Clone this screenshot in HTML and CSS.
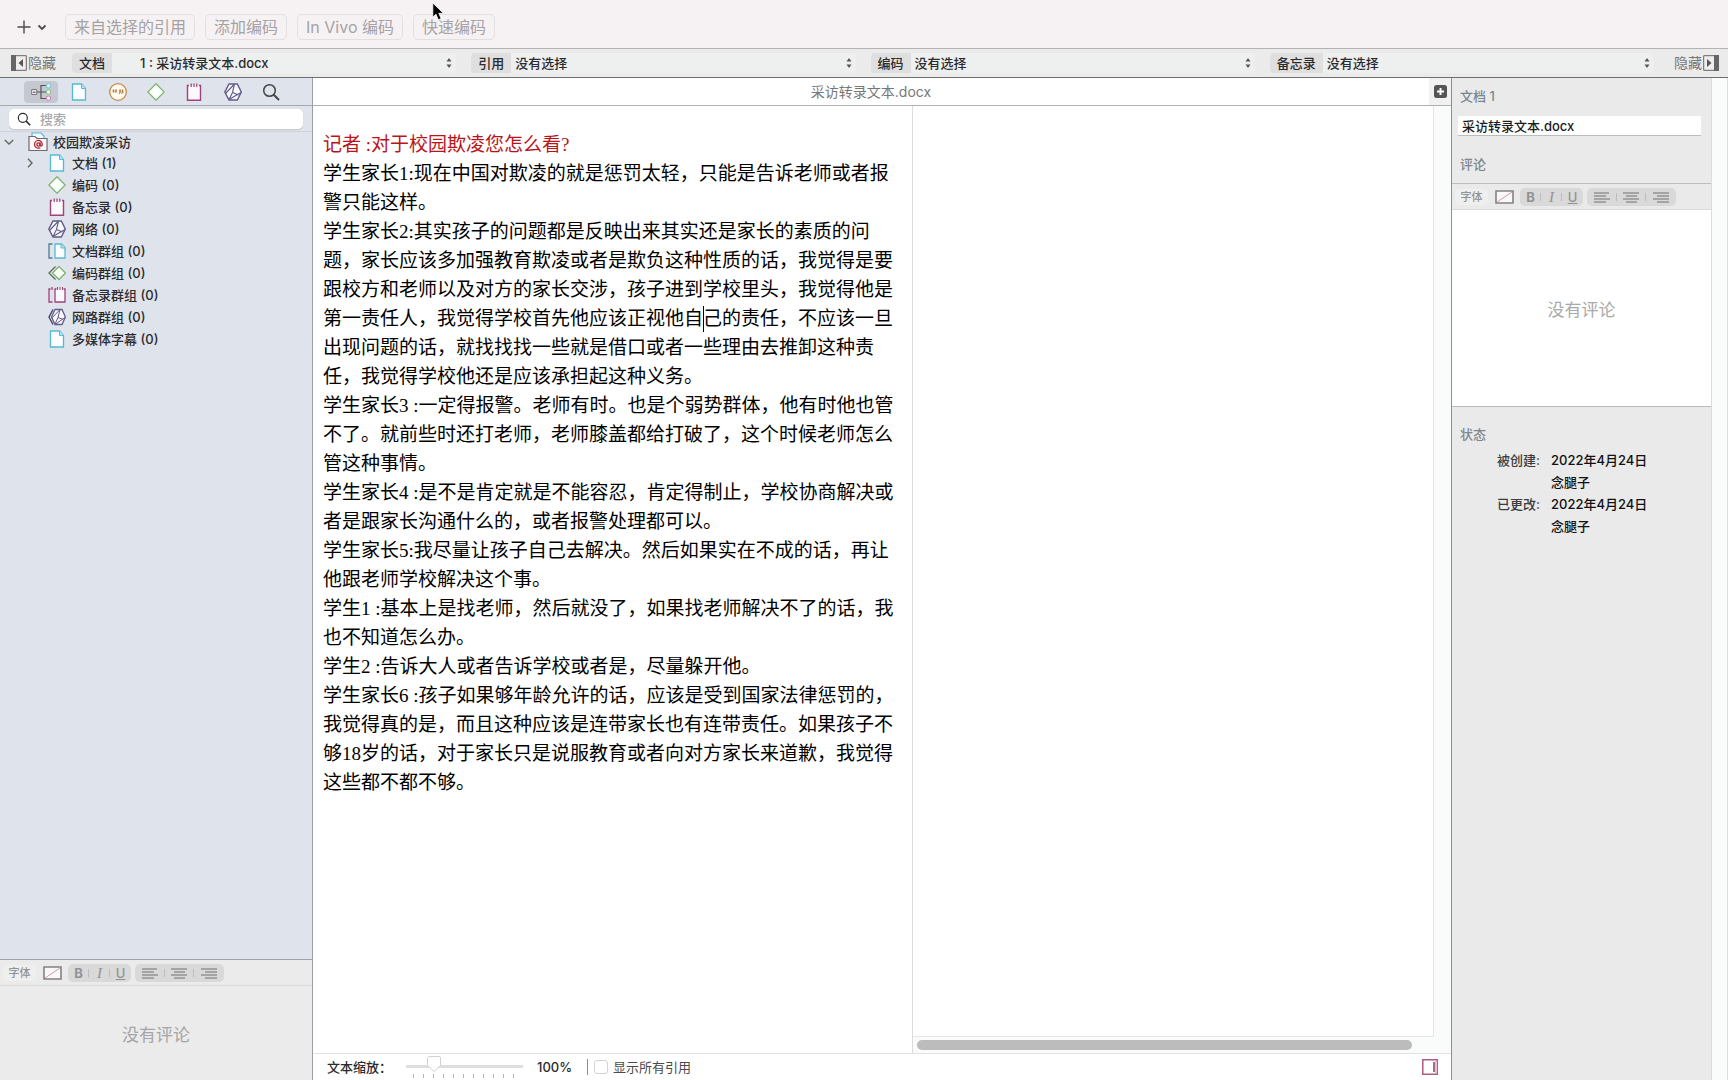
FILE: index.html
```html
<!DOCTYPE html>
<html lang="zh-CN">
<head>
<meta charset="utf-8">
<meta name="viewport" content="width=device-width, initial-scale=1">
<title>采访转录文本.docx</title>
<link rel="stylesheet" href="styles.css">
</head>
<body>
<svg class="sprite" aria-hidden="true">
  <symbol id="i-doc" viewBox="0 0 18 18"><path d="M2.5 1h9l4 4.500V17h-13z" fill="#fcfeff" stroke="#56b9d4" stroke-width="1.300"/><path d="M11.500 1v4.500h4" fill="#bfe6f2" stroke="#56b9d4"/></symbol>
  <symbol id="i-quote" viewBox="0 0 18 18"><circle cx="9" cy="9" r="8.300" fill="#fffaf2" stroke="#c88a45" stroke-width="1.300"/><path d="M4.500 6.500v3M7 6.500v3M11 6.500v3M13.500 6.500v3" fill="none" stroke="#b8762f" stroke-width="1.600"/><path d="m11.500 9-1.500 2M14 9l-1.500 2" stroke="#b8762f"/></symbol>
  <symbol id="i-code" viewBox="0 0 18 18"><path d="M9 .8 17.200 9 9 17.200.8 9z" fill="#fbfff9" stroke="#7fb274" stroke-width="1.300"/></symbol>
  <symbol id="i-memo" viewBox="0 0 18 18"><path d="M4 2.500H2.500V17.200h13V2.500H14" fill="#fdf8fc" stroke="#a0427c" stroke-width="1.400"/><path d="M6.200.5v3.500M9 .5v3.500M11.800.5v3.500" stroke="#a0427c" stroke-width="1.200"/></symbol>
  <symbol id="i-net" viewBox="0 0 18 18"><path d="M5 1h8.300l4 8-4 8H5L.8 9z" fill="#f8f7fd" stroke="#625c88" stroke-width="1.400"/><path d="M10.500 1 8.500 9.500 5 16.500M8.500 9.500l6 2.500M1.500 10.500 10.500 1M5 16.500 17 9.500" fill="none" stroke="#625c88" stroke-width="1.100"/></symbol>
  <symbol id="i-docs" viewBox="0 0 18 18"><path d="M4.500 2H1v14h3.500" fill="none" stroke="#4b7f92" stroke-width="1.300"/><path d="M7 2h6.500L17 5.500V16H7z" fill="#fcfeff" stroke="#56b9d4" stroke-width="1.300"/><path d="M13 2v4h4" fill="#bfe6f2" stroke="#56b9d4"/></symbol>
  <symbol id="i-codes" viewBox="0 0 18 18"><path d="M7.500 2.500 1 9l6.500 6.500" fill="none" stroke="#58724f" stroke-width="1.300"/><path d="M11 2.500 17.500 9 11 15.500 4.500 9z" fill="#fbfff9" stroke="#7fb274" stroke-width="1.300"/></symbol>
  <symbol id="i-memos" viewBox="0 0 18 18"><path d="M7 3h10v13H7z" fill="#fdf8fc"/><path d="M2.500 3H1v13h3.500M4 1v3M8.500 3H7v13h10V3h-1.500" fill="none" stroke="#a0427c" stroke-width="1.300"/><path d="M9.500 1v3M12 1v3M14.500 1v3" stroke="#a0427c"/></symbol>
  <symbol id="i-nets" viewBox="0 0 18 18"><path d="M5 1.500 1 9l4 7.500" fill="none" stroke="#3f3b60" stroke-width="1.300"/><path d="M7 1.500h7L17.400 9 14 16.500H7L3.500 9z" fill="#f8f7fd" stroke="#625c88" stroke-width="1.300"/><path d="M12 1.500 10 9.500l-3 6.500M10 9.500l5 2M4 10l8-8.500M7 16.500 17 9.500" fill="none" stroke="#625c88"/></symbol>
  <symbol id="i-search" viewBox="0 0 18 18"><circle cx="7.500" cy="7.500" r="5.800" fill="none" stroke="currentColor" stroke-width="1.500"/><path d="m11.700 11.700 5.300 5.300" stroke="currentColor" stroke-width="2"/></symbol>
  <symbol id="i-step" viewBox="0 0 6 12"><path d="M.5 4.500 3 1l2.500 3.500zM.5 7.500 3 11l2.500-3.500z" fill="#555"/></symbol>
  <symbol id="i-left" viewBox="0 0 16 12"><path d="M0 2h15M0 5h12M0 8h16M0 11h12" stroke="currentColor" stroke-width="1.500"/></symbol>
  <symbol id="i-center" viewBox="0 0 16 12"><path d="M0 2h16M3 5h11M0 8h16M3 11h11" stroke="currentColor" stroke-width="1.500"/></symbol>
  <symbol id="i-right" viewBox="0 0 16 12"><path d="M0 2h16M4 5h12M0 8h16M4 11h12" stroke="currentColor" stroke-width="1.500"/></symbol>
  <symbol id="i-swatch" viewBox="0 0 19 14"><path d="M1 1h17v12H1z" fill="#faf7f8" stroke="#858183" stroke-width="1.600"/><path d="M2 12 17 2" stroke="#c8a3a8"/></symbol>
</svg>

<header class="topbar">
  <button class="add" aria-label="新建">
    <svg width="30" height="14" viewBox="0 0 30 14"><path d="M.5 7h13M7 .5v13" stroke="#4c4a4b" stroke-width="1.400"/><path d="m21.500 5.500 3.500 3.500 3.500-3.500" fill="none" stroke="#4c4a4b" stroke-width="1.800"/></svg>
  </button>
  <button class="action">来自选择的引用</button>
  <button class="action">添加编码</button>
  <button class="action">In Vivo 编码</button>
  <button class="action">快速编码</button>
  <svg class="pointer" width="12" height="19" viewBox="0 0 12 19" aria-hidden="true"><path d="M.8 1v14.200l3.200-3 2.300 5.600 2.800-1.200-2.300-5.300h4.600z" fill="#000" stroke="#fff" stroke-width=".8"/></svg>
</header>

<nav class="crumbs">
  <button class="hide">
    <svg width="16" height="16" viewBox="0 0 16 16"><path d="M.7.7h14.600v14.600H.7z" fill="#eee" stroke="#666"/><path d="M0 0h5v16H0z" fill="#666"/><path d="M12 4v8L7.500 8z" fill="#555"/></svg>隐藏</button>
  <div class="chooser chooser-doc"><label for="c1">文档</label><select id="c1"><option>1 : 采访转录文本.docx</option></select><svg width="6" height="12"><use href="#i-step"/></svg></div>
  <div class="chooser"><label for="c2">引用</label><select id="c2"><option>没有选择</option></select><svg width="6" height="12"><use href="#i-step"/></svg></div>
  <div class="chooser"><label for="c3">编码</label><select id="c3"><option>没有选择</option></select><svg width="6" height="12"><use href="#i-step"/></svg></div>
  <div class="chooser"><label for="c4">备忘录</label><select id="c4"><option>没有选择</option></select><svg width="6" height="12"><use href="#i-step"/></svg></div>
  <button class="hide hide-right">隐藏<svg width="16" height="16" viewBox="0 0 16 16"><path d="M.7.7h14.600v14.600H.7z" fill="#eee" stroke="#666"/><path d="M11 0h5v16h-5z" fill="#666"/><path d="M4 4v8l4.500-4z" fill="#555"/></svg></button>
</nav>

<main class="workspace">
  <aside class="sidebar">
    <div class="tabs">
      <button class="tab tab-on" aria-label="项目"><svg width="21" height="18" viewBox="0 0 21 18"><path d="M.7 6.500h5v5h-5z" fill="#eef" stroke="#777"/><path d="M2 8.500h2.500v1.500H2z" fill="#966"/><path d="M6 9h9M15 2.500h-5v13h5" fill="none" stroke="#555" stroke-width="1.200"/><circle cx="17.500" cy="2.800" r="2.200" fill="#dff" stroke="#6cc5d4"/><circle cx="17.500" cy="9" r="2.200" fill="#efe" stroke="#86c183"/><circle cx="17.500" cy="15.200" r="2.200" fill="#fef" stroke="#ca7db5"/></svg></button>
      <button class="tab" aria-label="文档"><svg width="18" height="18"><use href="#i-doc"/></svg></button>
      <button class="tab" aria-label="引用"><svg width="18" height="18"><use href="#i-quote"/></svg></button>
      <button class="tab" aria-label="编码"><svg width="18" height="18"><use href="#i-code"/></svg></button>
      <button class="tab" aria-label="备忘录"><svg width="18" height="18"><use href="#i-memo"/></svg></button>
      <button class="tab" aria-label="网络"><svg width="18" height="18"><use href="#i-net"/></svg></button>
      <button class="tab" aria-label="搜索"><svg width="18" height="18"><use href="#i-search"/></svg></button>
    </div>
    <div class="search">
      <label class="search-box"><svg width="14" height="14"><use href="#i-search"/></svg><input type="search" placeholder="搜索" aria-label="搜索"></label>
    </div>
    <ul class="tree">
      <li class="root"><svg class="twist" width="10" height="10" viewBox="0 0 10 10"><path d="m.8 3 4.200 4 4.200-4" fill="none" stroke="#666" stroke-width="1.400"/></svg><svg width="20" height="20" viewBox="0 0 20 20"><path d="M4 4V1h9l3 3v3" fill="#f4fcff" stroke="#56b9d4" stroke-width="1.200"/><path d="M1 4.500h6l2 2h10v12H1z" fill="#fbf9fa" stroke="#6e6872" stroke-width="1.200"/><circle cx="10.500" cy="12.500" r="1.600" fill="none" stroke="#b3202c" stroke-width="1.400"/><path d="M12.200 10.500v2.600q.2 1.200 1.300.8 1-.6.800-1.900a3.900 3.900 0 1 0-2 3.700" fill="none" stroke="#b3202c" stroke-width="1.200"/></svg><span>校园欺凌采访</span></li>
      <li><svg class="twist" width="10" height="10" viewBox="0 0 10 10"><path d="m3 .8 4 4.200-4 4.200" fill="none" stroke="#666" stroke-width="1.400"/></svg><svg width="18" height="18"><use href="#i-doc"/></svg><span>文档 (1)</span></li>
      <li class="leaf"><svg width="18" height="18"><use href="#i-code"/></svg><span>编码 (0)</span></li>
      <li class="leaf"><svg width="18" height="18"><use href="#i-memo"/></svg><span>备忘录 (0)</span></li>
      <li class="leaf"><svg width="18" height="18"><use href="#i-net"/></svg><span>网络 (0)</span></li>
      <li class="leaf"><svg width="18" height="18"><use href="#i-docs"/></svg><span>文档群组 (0)</span></li>
      <li class="leaf"><svg width="18" height="18"><use href="#i-codes"/></svg><span>编码群组 (0)</span></li>
      <li class="leaf"><svg width="18" height="18"><use href="#i-memos"/></svg><span>备忘录群组 (0)</span></li>
      <li class="leaf"><svg width="18" height="18"><use href="#i-nets"/></svg><span>网路群组 (0)</span></li>
      <li class="leaf"><svg width="18" height="18"><use href="#i-doc"/></svg><span>多媒体字幕 (0)</span></li>
    </ul>
    <section class="note">
      <div class="format">
        <button class="font">字体</button>
        <button class="swatch" aria-label="颜色"><svg width="19" height="14"><use href="#i-swatch"/></svg></button>
        <div class="group"><button class="b">B</button><button class="i">I</button><button class="u">U</button></div>
        <div class="group group-align"><button aria-label="左对齐"><svg width="16" height="12"><use href="#i-left"/></svg></button><button aria-label="居中"><svg width="16" height="12"><use href="#i-center"/></svg></button><button aria-label="右对齐"><svg width="16" height="12"><use href="#i-right"/></svg></button></div>
      </div>
      <p class="empty">没有评论</p>
    </section>
  </aside>

  <section class="editor">
    <header class="doc-title"><h1>采访转录文本.docx</h1><button class="split" aria-label="添加窗格"><svg width="13" height="13" viewBox="0 0 13 13"><rect width="13" height="13" rx="2.500" fill="#555"/><path d="M6.500 3v7M3 6.500h7" stroke="#fff" stroke-width="2"/></svg></button></header>
    <div class="panes">
      <article class="transcript">
        <p class="question">记者 :对于校园欺凌您怎么看?</p>
        <p>学生家长1:现在中国对欺凌的就是惩罚太轻，只能是告诉老师或者报警只能这样。</p>
        <p>学生家长2:其实孩子的问题都是反映出来其实还是家长的素质的问题，家长应该多加强教育欺凌或者是欺负这种性质的话，我觉得是要跟校方和老师以及对方的家长交涉，孩子进到学校里头，我觉得他是第一责任人，我觉得学校首先他应该正视他自<span class="caret"></span>己的责任，不应该一旦出现问题的话，就找找找一些就是借口或者一些理由去推卸这种责任，我觉得学校他还是应该承担起这种义务。</p>
        <p>学生家长3 :一定得报警。老师有时。也是个弱势群体，他有时他也管不了。就前些时还打老师，老师膝盖都给打破了，这个时候老师怎么管这种事情。</p>
        <p>学生家长4 :是不是肯定就是不能容忍，肯定得制止，学校协商解决或者是跟家长沟通什么的，或者报警处理都可以。</p>
        <p>学生家长5:我尽量让孩子自己去解决。然后如果实在不成的话，再让他跟老师学校解决这个事。</p>
        <p>学生1 :基本上是找老师，然后就没了，如果找老师解决不了的话，我也不知道怎么办。</p>
        <p>学生2 :告诉大人或者告诉学校或者是，尽量躲开他。</p>
        <p>学生家长6 :孩子如果够年龄允许的话，应该是受到国家法律惩罚的，我觉得真的是，而且这种应该是连带家长也有连带责任。如果孩子不够18岁的话，对于家长只是说服教育或者向对方家长来道歉，我觉得这些都不都不够。</p>
      </article>
      <div class="margin">
        <div class="margin-area"></div>
        <div class="scroll"><div class="scroll-thumb"></div></div>
      </div>
    </div>
    <footer class="status">
      <label for="zoom">文本缩放：</label>
      <div class="zoom"><input id="zoom" type="range" min="0" max="100" value="20"><div class="ticks"></div></div>
      <output for="zoom">100%</output>
      <label class="show-all"><input type="checkbox">显示所有引用</label>
      <button class="toggle" aria-label="边栏"><svg width="16" height="16" viewBox="0 0 16 16"><path d="M.8.8h14.400v14.400H.8z" fill="#fff" stroke="#b05a86" stroke-width="1.500"/><path d="M13 2h2v12h-2z" fill="#f3b9d4"/><path d="M12 3v10" stroke="#823b63" stroke-width="1.500"/></svg></button>
    </footer>
  </section>

  <aside class="inspector">
    <div class="inspector-body">
      <h2>文档 1</h2>
      <input class="name" type="text" value="采访转录文本.docx" aria-label="名称">
      <h2>评论</h2>
      <div class="format">
        <button class="font">字体</button>
        <button class="swatch" aria-label="颜色"><svg width="19" height="14"><use href="#i-swatch"/></svg></button>
        <div class="group"><button class="b">B</button><button class="i">I</button><button class="u">U</button></div>
        <div class="group group-align"><button aria-label="左对齐"><svg width="16" height="12"><use href="#i-left"/></svg></button><button aria-label="居中"><svg width="16" height="12"><use href="#i-center"/></svg></button><button aria-label="右对齐"><svg width="16" height="12"><use href="#i-right"/></svg></button></div>
      </div>
      <p class="comment">没有评论</p>
      <h2>状态</h2>
      <dl>
        <dt>被创建:</dt><dd>2022年4月24日</dd><dd>念腿子</dd>
        <dt>已更改:</dt><dd>2022年4月24日</dd><dd>念腿子</dd>
      </dl>
    </div>
  </aside>
</main>
</body>
</html>
```
FILE: styles.css
```css
* { box-sizing: border-box; }
body {
  margin: 0;
  min-height: 100vh;
  display: flex;
  flex-direction: column;
  font: 500 13px/20px Inter, "Noto Sans CJK SC", sans-serif;
  color: #2b2b2d;
  background: #fff;
}
h1, h2, p, ul, dl, dd { margin: 0; padding: 0; }
button, input, select { font: inherit; color: inherit; }
button { border: 0; padding: 0; background: none; }
svg { display: block; flex: none; }
.sprite { position: absolute; width: 0; height: 0; }

/* Top bar */
.topbar {
  position: relative;
  display: flex;
  align-items: flex-end;
  gap: 10px;
  height: 49px;
  padding: 0 17px 8px;
  background: #f6f2f4;
  border-bottom: 1px solid #b5b2b4;
}
.add { height: 26px; margin-right: 8px; display: flex; align-items: center; }
.action {
  height: 26px;
  padding: 0 8px;
  border: 1px solid #e3dfe1;
  border-radius: 5px;
  font-size: 16px;
  font-weight: 400;
  line-height: 22px;
  color: #a5a2a4;
}
.pointer { position: absolute; left: 432px; top: 2px; }

/* Choosers */
.crumbs {
  display: flex;
  align-items: center;
  gap: 15px;
  height: 29px;
  padding: 0 9px 0 11px;
  background: #ebebeb;
  border-bottom: 1px solid #6f6f6f;
}
.hide { display: flex; align-items: center; gap: 1px; width: 46px; font-size: 14px; font-weight: 400; color: #777; }
.hide-right { width: 50px; justify-content: flex-end; }
.chooser {
  flex: 1;
  min-width: 0;
  display: flex;
  align-items: center;
  height: 20px;
  padding-right: 4px;
  border-radius: 4px;
  background: #eeefef;
}
.chooser label { padding: 0 7px; border-radius: 4px 0 0 4px; background: #dfdfdf; white-space: nowrap; }
.chooser select { appearance: none; flex: 1; min-width: 0; height: 20px; padding: 0 4px; border: 0; background: none; }
.chooser-doc select { padding-left: 28px; }

.workspace { flex: 1; display: grid; grid-template-columns: 313px minmax(0, 1fr) 277px; }

/* Sidebar */
.sidebar { display: flex; flex-direction: column; background: #dfe3ec; border-right: 1px solid #9d9da5; }
.tabs { display: flex; align-items: center; justify-content: space-between; height: 28px; padding: 0 24px; padding-right: 24px; border-bottom: 1px solid #a6a8af; }
.tab { display: grid; place-items: center; width: 34px; height: 22px; border-radius: 4px; color: #454545; }
.tab-on { background: #c5c8d0; }
.search { height: 26px; padding: 3px 9px 2px; border-bottom: 1px solid #cfd2da; }
.search-box { display: flex; align-items: center; gap: 9px; height: 20px; padding-left: 8px; border-radius: 5px; background: #fff; box-shadow: 0 1px 1px #c3c6cc; }
.search-box input { flex: 1; min-width: 0; height: 20px; padding: 0; border: 0; outline: 0; background: none; }
.search-box input::placeholder { color: #a9a9a9; }
.tree { flex: 1; list-style: none; }
.tree li { display: flex; align-items: center; height: 22px; gap: 6px; padding-left: 25px; }
.tree .root { height: 20px; padding-left: 4px; gap: 5px; }
.tree .root .twist { margin-right: 9px; }
.tree .twist { margin-right: 7px; }
.tree .leaf { padding-left: 48px; }
.note { height: 121px; border-top: 1px solid #a0a1a8; background: #ebebeb; }
.empty { padding-top: 39px; text-align: center; font-size: 17px; font-weight: 400; color: #a5a5a5; }

/* Formatting bar */
.format { display: flex; align-items: center; gap: 4px; height: 26px; padding-left: 3px; border-bottom: 1px solid #d9d9d9; color: #929292; }
.font { width: 33px; height: 16px; border-radius: 4px; background: #efefef; font-size: 11px; line-height: 16px; }
.swatch { padding: 0 2px 0 3px; }
.group { display: grid; grid-template-columns: repeat(3, 1fr); align-items: center; width: 63px; height: 18px; border-radius: 5px; background: #d9d9d9; }
.group-align { width: 89px; }
.group button { display: grid; place-items: center; height: 18px; line-height: 18px; background: linear-gradient(#bdbdbd, #bdbdbd) 100% 50% / 1px 8px no-repeat; }
.group button:last-child { background: none; }
.group .b { font-weight: 700; }
.group .i { font: italic 15px/18px "Liberation Serif", serif; }
.group .u { text-decoration: underline; }

/* Editor */
.editor { display: flex; flex-direction: column; min-width: 0; }
.doc-title { display: flex; align-items: center; height: 28px; border-bottom: 1px solid #b0b0b0; }
.doc-title h1 { flex: 1; text-align: center; font-size: 14px; font-weight: 400; color: #777; }
.split { display: grid; place-items: center; width: 22px; height: 27px; background: #f1f1f1; }
.panes { flex: 1; display: grid; grid-template-columns: 600px minmax(0, 1fr); border-bottom: 1px solid #e2e2e2; }
.transcript {
  padding: 24px 11px 24px 10px;
  border-right: 1px solid #dcdcdc;
  font: 400 19px/29px "Liberation Serif", "Noto Sans CJK SC", serif;
  color: #000;
}
.question { color: #b9141a; }
.caret { position: relative; }
.caret::after { content: ""; position: absolute; left: 0; top: -2px; width: 1px; height: 26px; background: #000; }
.margin { display: flex; flex-direction: column; background: #fafbfb; }
.margin-area { flex: 1; margin-right: 17px; background: #fff; border-right: 1px solid #e5e5e5; border-bottom: 1px solid #e5e5e5; }
.scroll { height: 16px; padding: 3px 39px 3px 4px; }
.scroll-thumb { height: 10px; border-radius: 5px; background: #bcbcbc; }

.status { display: flex; align-items: center; height: 26px; padding: 0 13px 0 14px; }
.zoom { width: 117px; margin: 0 14px; }
.zoom input { appearance: none; display: block; width: 117px; height: 16px; margin: 0; background: linear-gradient(#dedede, #dedede) 0 9px / 100% 3px no-repeat; }
.zoom input::-webkit-slider-thumb {
  appearance: none;
  width: 14px;
  height: 16px;
  background: url("data:image/svg+xml,%3Csvg xmlns='http://www.w3.org/2000/svg' width='14' height='16'%3E%3Cpath d='M1.500.5h11l1 1v8L7 15.500.5 9.500v-8z' fill='white' stroke='%23d0d0d0'/%3E%3C/svg%3E");
}
.ticks { width: 101px; height: 4px; margin: 2px 0 0 7px; background: repeating-linear-gradient(90deg, #b5b5b5 0 1px, transparent 1px 10px); }
.show-all { display: flex; align-items: center; gap: 5px; margin-left: 15px; padding-left: 6px; font-weight: 400; color: #4a4a4a; border-left: 1px solid #8d8d8d; line-height: 16px; }
.show-all input { appearance: none; width: 14px; height: 14px; margin: 0; border: 1px solid #d3d3d3; border-radius: 3px; background: #fff; }
.toggle { margin-left: auto; }

/* Inspector */
.inspector { padding-right: 15px; background: #fafbfb; border-left: 1px solid #8f8f8f; border-right: 1px solid #dedede; }
.inspector-body { height: 100%; background: #eaeaea; border-right: 1px solid #dcdcdc; }
.inspector h2 { padding: 8px 8px 0; font-size: 13px; font-weight: 500; line-height: 20px; color: #7c8790; }
.name { display: block; width: 243px; height: 20px; margin: 10px 0 10px 6px; padding: 0 4px; border: 0; border-bottom: 1px solid #bcbcbc; background: #fff; color: #1c1c1c; }
.inspector .format { height: 27px; margin-top: 9px; border-top: 1px solid #bebebe; }
.comment { height: 197px; margin-bottom: 9px; padding-top: 90px; background: #fff; border-bottom: 1px solid #b9b9b9; text-align: center; font-size: 17px; font-weight: 400; color: #a9a9a9; }
dl { display: grid; grid-template-columns: 88px 1fr; column-gap: 11px; padding-top: 5px; line-height: 22px; }
dt { grid-column: 1; text-align: right; color: #3c3c3c; }
dd { grid-column: 2; color: #111; }
```
